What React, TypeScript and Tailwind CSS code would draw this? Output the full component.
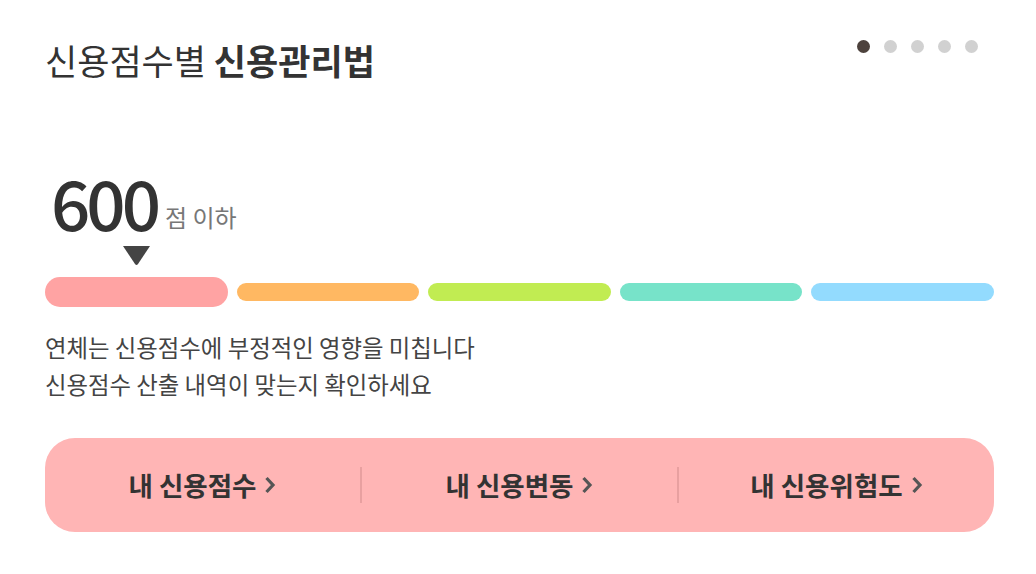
import React from 'react';

const bars = [
  { color: 'bg-[#ffa3a3]', active: true },
  { color: 'bg-[#ffb862]', active: false },
  { color: 'bg-[#c1ec52]', active: false },
  { color: 'bg-[#77e3c9]', active: false },
  { color: 'bg-[#93dbfe]', active: false },
];

const links = ['내 신용점수', '내 신용변동', '내 신용위험도'];

const Chevron = () => (
  <svg width="12" height="20" viewBox="0 0 12 20" className="shrink-0">
    <path d="M2.5 3 L9 10 L2.5 17" fill="none" stroke="#555" strokeWidth="3.2" />
  </svg>
);

const App = () => {
  return (
    <div
      className="w-[1036px] h-[574px] bg-white pl-[45px] pr-[42px] pt-[38px] text-[#333]"
      style={{ fontFamily: '"Noto Sans CJK KR", "Noto Sans", sans-serif' }}
    >
      {/* header */}
      <div className="flex justify-between items-start">
        <h1 className="text-[35px] leading-[44px] font-normal text-[#333]">
          신용점수별 <span className="font-bold">신용관리법</span>
        </h1>
        <div className="flex gap-[14px] mt-[2px] mr-[16px]">
          <span className="w-[13px] h-[13px] rounded-full bg-[#4d423d]" />
          <span className="w-[13px] h-[13px] rounded-full bg-[#d1d1d1]" />
          <span className="w-[13px] h-[13px] rounded-full bg-[#d1d1d1]" />
          <span className="w-[13px] h-[13px] rounded-full bg-[#d1d1d1]" />
          <span className="w-[13px] h-[13px] rounded-full bg-[#d1d1d1]" />
        </div>
      </div>

      {/* score */}
      <div className="flex items-end mt-[89px] pl-[6px]">
        <span className="text-[69px] leading-[60px] font-medium tracking-[-4px] text-[#333]">600</span>
        <span className="text-[24px] leading-[28px] text-[#777] ml-[8px]">점 이하</span>
      </div>

      <div className="mt-[14px] ml-[77px] w-[29px] h-[21px]">
        <svg width="29" height="21" viewBox="0 0 29 21">
          <path d="M1 1 L28 1 L16 19 Q14.5 21 13 19 Z" fill="#444" />
        </svg>
      </div>

      {/* bars */}
      <div className="mt-[11px] h-[30px] flex items-center gap-[9px]">
        {bars.map((b, i) => (
          <div
            key={i}
            className={`flex-1 rounded-full ${b.color} ${b.active ? 'h-[30px]' : 'h-[18px]'}`}
          />
        ))}
      </div>

      {/* description */}
      <div className="mt-[22px] text-[23.4px] leading-[37px] text-[#444]">
        <p>연체는 신용점수에 부정적인 영향을 미칩니다</p>
        <p>신용점수 산출 내역이 맞는지 확인하세요</p>
      </div>

      {/* links */}
      <div className="mt-[35px] h-[94px] rounded-[30px] bg-[#ffb5b5] flex items-center">
        {links.map((label, i) => (
          <React.Fragment key={label}>
            {i > 0 && <div className="w-[2px] h-[36px] bg-[#e8a0a0]" />}
            <div className="flex-1 flex items-center justify-center gap-[8px]">
              <span className="text-[26.5px] font-bold text-[#333]">{label}</span>
              <Chevron />
            </div>
          </React.Fragment>
        ))}
      </div>
    </div>
  );
};

export default App;
